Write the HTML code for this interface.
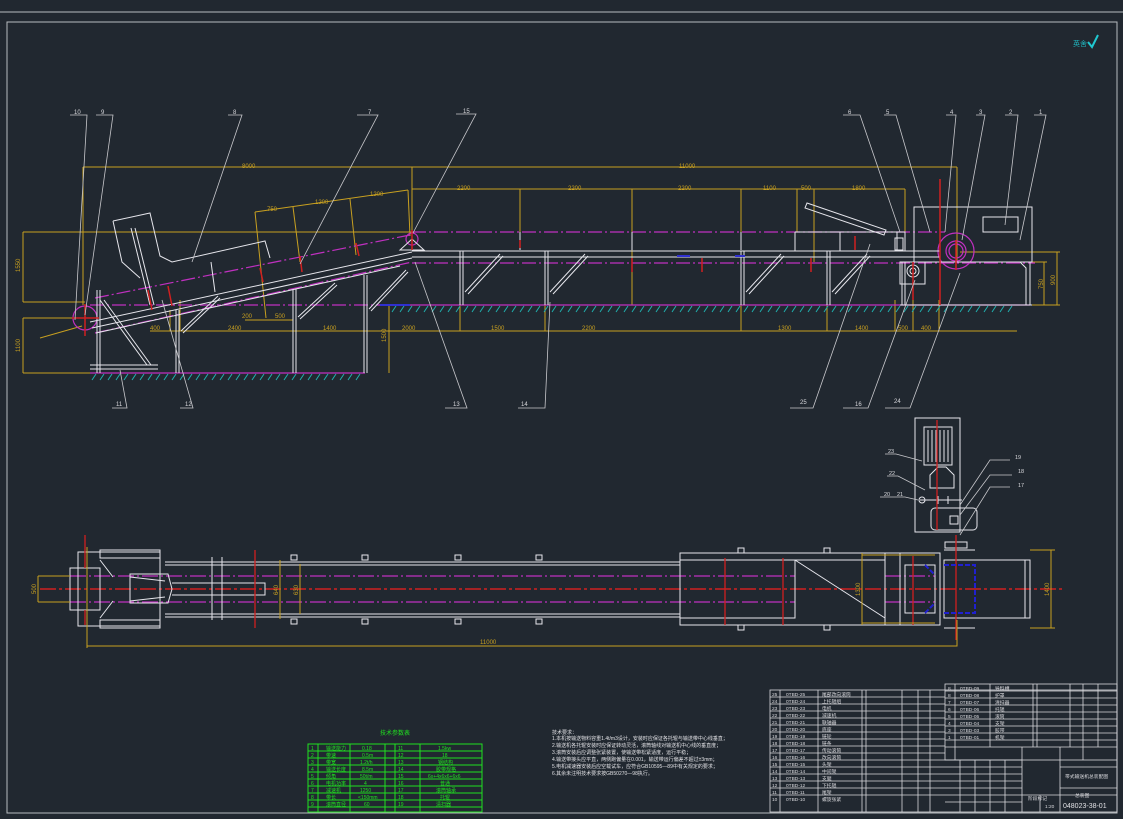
<!DOCTYPE html>
<html><head><meta charset="utf-8"><style>
html,body{margin:0;padding:0;background:#212830;}
svg{display:block;}
text{font-family:"Liberation Sans","Noto Sans CJK SC",sans-serif;}
</style></head><body>
<svg width="1123" height="819" viewBox="0 0 1123 819" xmlns="http://www.w3.org/2000/svg">
<rect width="1123" height="819" fill="#212830"/>
<!-- frames -->
<g fill="none" stroke="#b8bcc0" stroke-width="1">
<line x1="0" y1="12" x2="1123" y2="12"/>
<rect x="7" y="22" width="1110" height="791"/>
</g>
<text x="1073" y="46" font-size="7" fill="#20b8c0">英舍</text>
<path d="M1088 42 l4 5 l6 -12" stroke="#20c8d0" stroke-width="2" fill="none"/>

<!-- ===== ELEVATION VIEW ===== -->
<!-- dimensions yellow -->
<g stroke="#c8a020" stroke-width="1" fill="none">
<line x1="83" y1="167" x2="957" y2="167"/>
<line x1="412" y1="189" x2="905" y2="189"/>
<line x1="83" y1="167" x2="83" y2="305"/>
<line x1="412" y1="167" x2="412" y2="238"/>
<line x1="957" y1="167" x2="957" y2="262"/>
<line x1="520" y1="189" x2="520" y2="232"/>
<line x1="632" y1="189" x2="632" y2="305"/>
<line x1="741" y1="189" x2="741" y2="232"/>
<line x1="797" y1="189" x2="797" y2="232"/>
<line x1="814" y1="189" x2="814" y2="262"/>
<line x1="905" y1="189" x2="905" y2="232"/>
<line x1="23" y1="232" x2="412" y2="232"/>
<line x1="23" y1="302" x2="85" y2="302"/>
<line x1="23" y1="232" x2="23" y2="302"/>
<line x1="23" y1="318" x2="23" y2="373"/>
<line x1="23" y1="318" x2="85" y2="318"/>
<line x1="23" y1="373" x2="92" y2="373"/>
<line x1="150" y1="331" x2="1017" y2="331"/>
<line x1="170" y1="331" x2="170" y2="310"/>
<line x1="180" y1="331" x2="180" y2="300"/>
<line x1="293" y1="331" x2="293" y2="300"/>
<line x1="364" y1="331" x2="364" y2="300"/>
<line x1="460" y1="331" x2="460" y2="300"/>
<line x1="545" y1="331" x2="545" y2="300"/>
<line x1="741" y1="331" x2="741" y2="300"/>
<line x1="827" y1="331" x2="827" y2="300"/>
<line x1="895" y1="331" x2="895" y2="300"/>
<line x1="913" y1="331" x2="913" y2="300"/>
<line x1="939" y1="331" x2="939" y2="300"/>
<line x1="389" y1="305" x2="389" y2="373"/>
<line x1="255" y1="212" x2="408" y2="190"/>
<line x1="255" y1="212" x2="266" y2="318"/>
<line x1="293" y1="207" x2="300" y2="262"/>
<line x1="350" y1="199" x2="356" y2="255"/>
<line x1="408" y1="190" x2="410" y2="236"/>
<line x1="245" y1="320" x2="293" y2="320"/>
<line x1="1057" y1="252" x2="1057" y2="305"/>
<line x1="1044" y1="262" x2="1044" y2="305"/>
<line x1="960" y1="252" x2="1060" y2="252"/>
<line x1="1032" y1="262" x2="1047" y2="262"/>
<line x1="1030" y1="305" x2="1060" y2="305"/>
<line x1="40" y1="338" x2="82" y2="326"/>
</g>
<g fill="#c8a020" font-size="6">
<text x="242" y="168">8000</text><text x="679" y="168">11000</text>
<text x="457" y="190">2200</text><text x="568" y="190">2200</text><text x="678" y="190">2200</text>
<text x="763" y="190">1100</text><text x="801" y="190">500</text><text x="852" y="190">1800</text>
<text x="267" y="211">750</text><text x="315" y="204">1200</text><text x="370" y="196">1200</text>
<text x="150" y="330">400</text><text x="228" y="330">2400</text><text x="323" y="330">1400</text>
<text x="402" y="330">2000</text><text x="491" y="330">1500</text><text x="582" y="330">2200</text>
<text x="778" y="330">1300</text><text x="855" y="330">1400</text><text x="898" y="330">500</text><text x="921" y="330">400</text>
<text x="242" y="318">200</text><text x="275" y="318">500</text>
<text x="0" y="0" transform="translate(20,272) rotate(-90)">1550</text>
<text x="0" y="0" transform="translate(20,352) rotate(-90)">1100</text>
<text x="0" y="0" transform="translate(386,342) rotate(-90)">1500</text>
<text x="0" y="0" transform="translate(1055,285) rotate(-90)">900</text>
<text x="0" y="0" transform="translate(1043,289) rotate(-90)">750</text>
</g>
<!-- magenta belt lines -->
<g stroke="#c030c0" stroke-width="1.2" fill="none" stroke-dasharray="14 3 2 3">
<line x1="412" y1="232" x2="945" y2="232"/>
<line x1="412" y1="263" x2="1035" y2="263"/>
<line x1="95" y1="298" x2="410" y2="235"/>
<line x1="95" y1="333" x2="412" y2="262"/>
<line x1="90" y1="305" x2="390" y2="305"/>
</g>
<g stroke="#c030c0" stroke-width="1.2" fill="none">
<line x1="388" y1="305" x2="1030" y2="305"/>
<line x1="90" y1="373" x2="365" y2="373"/>
<circle cx="85" cy="318" r="12"/>
<circle cx="956" cy="251" r="18"/>
<circle cx="956" cy="251" r="10"/><circle cx="956" cy="251" r="7"/>
<circle cx="412" cy="239" r="6"/>
</g>
<!-- hatch -->
<g stroke="#20b0b0" stroke-width="1">
<path d="M392 312 l4 -6 M400 312 l4 -6 M408 312 l4 -6 M416 312 l4 -6 M424 312 l4 -6 M432 312 l4 -6 M440 312 l4 -6 M448 312 l4 -6 M456 312 l4 -6 M464 312 l4 -6 M472 312 l4 -6 M480 312 l4 -6 M488 312 l4 -6 M496 312 l4 -6 M504 312 l4 -6 M512 312 l4 -6 M520 312 l4 -6 M528 312 l4 -6 M536 312 l4 -6 M544 312 l4 -6 M552 312 l4 -6 M560 312 l4 -6 M568 312 l4 -6 M576 312 l4 -6 M584 312 l4 -6 M592 312 l4 -6 M600 312 l4 -6 M608 312 l4 -6 M616 312 l4 -6 M624 312 l4 -6 M632 312 l4 -6 M640 312 l4 -6 M648 312 l4 -6 M656 312 l4 -6 M664 312 l4 -6 M672 312 l4 -6 M680 312 l4 -6 M688 312 l4 -6 M696 312 l4 -6 M704 312 l4 -6 M712 312 l4 -6 M720 312 l4 -6 M728 312 l4 -6 M736 312 l4 -6 M744 312 l4 -6 M752 312 l4 -6 M760 312 l4 -6 M768 312 l4 -6 M776 312 l4 -6 M784 312 l4 -6 M792 312 l4 -6 M800 312 l4 -6 M808 312 l4 -6 M816 312 l4 -6 M824 312 l4 -6 M832 312 l4 -6 M840 312 l4 -6 M848 312 l4 -6 M856 312 l4 -6 M864 312 l4 -6 M872 312 l4 -6 M880 312 l4 -6 M888 312 l4 -6 M896 312 l4 -6 M904 312 l4 -6 M912 312 l4 -6 M920 312 l4 -6 M928 312 l4 -6 M936 312 l4 -6 M944 312 l4 -6 M952 312 l4 -6 M960 312 l4 -6 M968 312 l4 -6 M976 312 l4 -6 M984 312 l4 -6 M992 312 l4 -6 M1000 312 l4 -6 M1008 312 l4 -6"/>
<path d="M92 380 l4 -6 M100 380 l4 -6 M108 380 l4 -6 M116 380 l4 -6 M124 380 l4 -6 M132 380 l4 -6 M140 380 l4 -6 M148 380 l4 -6 M156 380 l4 -6 M164 380 l4 -6 M172 380 l4 -6 M180 380 l4 -6 M188 380 l4 -6 M196 380 l4 -6 M204 380 l4 -6 M212 380 l4 -6 M220 380 l4 -6 M228 380 l4 -6 M236 380 l4 -6 M244 380 l4 -6 M252 380 l4 -6 M260 380 l4 -6 M268 380 l4 -6 M276 380 l4 -6 M284 380 l4 -6 M292 380 l4 -6 M300 380 l4 -6 M308 380 l4 -6 M316 380 l4 -6 M324 380 l4 -6 M332 380 l4 -6 M340 380 l4 -6 M348 380 l4 -6 M356 380 l4 -6"/>
</g>
<!-- white structure -->
<g stroke="#e6e6ec" stroke-width="1" fill="none">
<line x1="412" y1="251" x2="940" y2="251"/>
<line x1="412" y1="257" x2="940" y2="257"/>
<line x1="90" y1="322" x2="412" y2="252"/>
<line x1="92" y1="328" x2="412" y2="258"/>
<line x1="96" y1="333" x2="400" y2="266"/>
<!-- supports flat -->
<path d="M460 251 V305 M463 251 V305 M545 251 V305 M548 251 V305 M741 251 V305 M744 251 V305 M827 251 V305 M830 251 V305"/>
<path d="M465 292 L500 254 M468 294 L503 256 M550 292 L585 254 M553 294 L588 256 M746 292 L781 254 M749 294 L784 256 M832 292 L867 254 M835 294 L870 256"/>
<!-- supports incline -->
<path d="M176 310 V373 M179 310 V373 M293 289 V373 M296 289 V373 M364 275 V373 M367 275 V373"/>
<path d="M181 331 L218 296 M183 333 L220 298 M298 317 L335 283 M300 319 L337 285 M369 309 L406 270 M371 311 L408 272"/>
<!-- hopper -->
<path d="M113 221 L150 213 L160 256 L172 262 L265 241 L270 258 M113 221 L122 262 L140 278"/>
<path d="M131 228 L150 305 M135 228 L154 305 M211 262 L215 292"/>
<!-- tail frame -->
<path d="M97 290 V373 M100 290 V373 M100 300 L147 365 M104 300 L151 365 M90 365 H158 M90 369 H158"/>
<!-- head -->
<path d="M412 239 L400 250 L424 250 Z"/>
<rect x="914" y="207" width="118" height="55"/>
<path d="M1020 262 L1026 268 V305 M1030 262 V305 M902 262 V305 M905 262 V305 M900 305 H1032"/>
<rect x="983" y="217" width="35" height="15"/>
<path d="M807 203 L886 230 L884 235 L805 208 Z"/>
<path d="M795 232 H905 V251 M795 232 V251 M840 232 V251"/>
<rect x="895" y="238" width="8" height="12"/>
<rect x="900" y="262" width="25" height="22"/>
<circle cx="913" cy="271" r="6"/>
<circle cx="913" cy="271" r="3"/>
<path d="M520 232 V250 M632 232 V250 M741 232 V250 M897 232 V250"/>
</g>
<g stroke="#d02020" stroke-width="1.5" fill="none">
<path d="M940 179 V305 M956 240 V270 M913 262 V300 M85 304 V336 M72 318 H99 M412 230 V250 M520 240 V248 M632 258 V272 M702 258 V272 M811 258 V272 M855 236 V250"/>
<path d="M148 290 L152 310 M168 286 L172 306 M260 268 L263 282 M300 256 L302 272 M356 243 L359 256"/>
</g>
<g stroke="#3030d0" stroke-width="2"><path d="M380 305 H410 M677 256 H690 M735 256 H745"/></g>
<!-- leaders -->
<g stroke="#c8c8cc" stroke-width="0.8" fill="none">
<path d="M70 115 H87 L75 320 M96 115 H113 L85 315 M228 115 H242 L192 262 M357 115 H378 L300 264 M456 114 H476 L413 233"/>
<path d="M843 115 H860 L900 232 M884 115 H896 L930 232 M946 115 H956 L945 232 M976 115 H985 L962 240 M1005 115 H1018 L1005 225 M1034 115 H1046 L1020 240"/>
<path d="M112 408 H127 L120 370 M180 408 H193 L162 300 M445 408 H467 L415 262 M518 408 H545 L550 302 M790 408 H813 L870 244 M843 408 H868 L915 280 M885 408 H910 L960 273"/>
</g>
<g fill="#d8d8dc" font-size="6">
<text x="74" y="114">10</text><text x="101" y="114">9</text><text x="233" y="114">8</text><text x="368" y="114">7</text><text x="463" y="113">15</text>
<text x="848" y="114">6</text><text x="886" y="114">5</text><text x="950" y="114">4</text><text x="979" y="114">3</text><text x="1009" y="114">2</text><text x="1039" y="114">1</text>
<text x="116" y="406">11</text><text x="185" y="406">12</text><text x="453" y="406">13</text><text x="521" y="406">14</text>
<text x="800" y="404">25</text><text x="855" y="406">16</text><text x="894" y="403">24</text>
</g>

<!-- ===== PLAN VIEW ===== -->
<g stroke="#d02020" stroke-width="1.5" stroke-dasharray="16 3 3 3">
<line x1="40" y1="589" x2="1065" y2="589"/>
</g>
<g stroke="#c030c0" stroke-width="1.2" stroke-dasharray="16 3 2 3">
<line x1="70" y1="576" x2="795" y2="576"/>
<line x1="70" y1="602" x2="795" y2="602"/>
<line x1="885" y1="576" x2="935" y2="576"/>
<line x1="885" y1="602" x2="935" y2="602"/>
</g>
<g stroke="#e6e6ec" stroke-width="1" fill="none">
<path d="M165 562 H680 M165 565 H680 M165 614 H680 M165 617 H680"/>
<rect x="70" y="568" width="30" height="42"/>
<rect x="78" y="552" width="82" height="74"/>
<rect x="100" y="550" width="60" height="8"/><rect x="100" y="620" width="60" height="8"/>
<path d="M130 574 H168 L172 589 L168 603 H130 Z M130 577 L165 581 M130 601 L165 597"/>
<path d="M172 583 H265 V595 H172"/>
<path d="M212 557 V620 M222 557 V620"/>
<path d="M100 560 L113 577 M100 618 L113 601"/>
<rect x="680" y="553" width="260" height="72"/>
<rect x="680" y="560" width="115" height="58"/>
<path d="M795 560 L885 618 M795 560 H885 M885 553 V625 M900 553 V625 M940 553 V625"/>
<rect x="944" y="560" width="86" height="58"/>
<path d="M1025 560 V618 M944 550 H975 M944 628 H975"/>
<rect x="905" y="565" width="30" height="48"/>
<rect x="915" y="418" width="45" height="114"/>
<rect x="924" y="427" width="28" height="38"/>
<path d="M928 430 V462 M932 430 V462 M936 430 V462 M940 430 V462 M944 430 V462 M948 430 V462"/>
<path d="M930 475 L938 467 H946 L954 475 V488 H930 Z"/>
<path d="M920 500 H962 M938 496 V504 M948 496 V504"/>
<circle cx="922" cy="500" r="3"/>
<rect x="931" y="508" width="46" height="22" rx="4"/>
<rect x="950" y="516" width="8" height="8"/>
<rect x="945" y="542" width="22" height="6"/>
</g>
<g fill="none" stroke="#e6e6ec" stroke-width="1">
<rect x="291" y="555" width="6" height="5"/><rect x="362" y="555" width="6" height="5"/><rect x="455" y="555" width="6" height="5"/><rect x="536" y="555" width="6" height="5"/>
<rect x="291" y="619" width="6" height="5"/><rect x="362" y="619" width="6" height="5"/><rect x="455" y="619" width="6" height="5"/><rect x="536" y="619" width="6" height="5"/>
<rect x="738" y="548" width="6" height="5"/><rect x="824" y="548" width="6" height="5"/><rect x="738" y="625" width="6" height="5"/><rect x="824" y="625" width="6" height="5"/>
</g>
<g stroke="#d02020" stroke-width="1.3"><path d="M85 535 V568 M85 610 V625 M255 550 V628 M725 558 V625 M783 558 V625 M913 556 V625 M956 535 V640 M937 420 V530"/></g>
<g stroke="#2020d0" stroke-width="2" fill="none" stroke-dasharray="5 2"><path d="M944 565 H975 V613 H944 M925 565 L935 575 M925 613 L935 603"/></g>
<g stroke="#c8a020" stroke-width="1" fill="none">
<path d="M87 547 V648 M87 646 H957 V620"/>
<path d="M38 576 H70 M38 602 H70 M38 576 V602"/>
<path d="M280 560 V619 M300 564 V614"/>
<path d="M862 553 V625 M862 555 H935 M862 623 H935"/>
<path d="M1051 550 V628 M1030 550 H1055 M1030 628 H1055"/>
</g>
<g fill="#c8a020" font-size="6">
<text x="480" y="644">11000</text>
<text transform="translate(36,594) rotate(-90)">500</text>
<text transform="translate(278,595) rotate(-90)">640</text>
<text transform="translate(298,595) rotate(-90)">630</text>
<text transform="translate(860,596) rotate(-90)">1300</text>
<text transform="translate(1049,596) rotate(-90)">1400</text>
</g>
<g stroke="#c8c8cc" stroke-width="0.8" fill="none">
<path d="M885 454 H896 L922 461 M887 476 H898 L925 490 M880 497 H905 L918 500 M1010 460 H990 L960 505 M1012 475 H990 L960 515 M1010 487 H990 L960 535"/>
</g>
<g fill="#d8d8dc" font-size="5.5">
<text x="888" y="453">23</text><text x="889" y="475">22</text><text x="884" y="496">20</text><text x="897" y="496">21</text>
<text x="1015" y="459">19</text><text x="1018" y="473">18</text><text x="1018" y="487">17</text>
</g>

<!-- ===== GREEN TABLE ===== -->
<text x="380" y="735" font-size="6" fill="#20e020">技术参数表</text>
<g stroke="#20e020" stroke-width="1" fill="none">
<rect x="308" y="744" width="174" height="68"/>
<path d="M308 751 H482 M308 758 H482 M308 765 H482 M308 772 H482 M308 779 H482 M308 786 H482 M308 793 H482 M308 800 H482 M308 807 H482"/>
<path d="M318 744 V812 M350 744 V812 M385 744 V812 M395 744 V812 M420 744 V812"/>
</g>
<g fill="#20e020" font-size="5">
<text x="311" y="750">1</text><text x="311" y="757">2</text><text x="311" y="764">3</text><text x="311" y="771">4</text><text x="311" y="778">5</text><text x="311" y="785">6</text><text x="311" y="792">7</text><text x="311" y="799">8</text><text x="311" y="806">9</text>
<text x="326" y="750">输送能力</text><text x="326" y="757">带速</text><text x="326" y="764">带宽</text><text x="326" y="771">输送长度</text><text x="326" y="778">倾角</text><text x="326" y="785">电机功率</text><text x="326" y="792">减速机</text><text x="326" y="799">带长</text><text x="326" y="806">滚筒直径</text>
<text x="362" y="750">0.18</text><text x="362" y="757">0.5m</text><text x="360" y="764">1.2t/h</text><text x="362" y="771">8.5m</text><text x="360" y="778">50t/m</text><text x="364" y="785">4</text><text x="360" y="792">1250</text><text x="358" y="799">&lt;150mm</text><text x="364" y="806">60</text>
<text x="398" y="750">11</text><text x="398" y="757">12</text><text x="398" y="764">13</text><text x="398" y="771">14</text><text x="398" y="778">15</text><text x="398" y="785">16</text><text x="398" y="792">17</text><text x="398" y="799">18</text><text x="398" y="806">19</text>
<text x="438" y="750">1.5kw</text><text x="442" y="757">18</text><text x="438" y="764">钢结构</text><text x="436" y="771">胶带规格</text><text x="428" y="778">6x+4x6x6+6x6</text><text x="440" y="785">普通</text><text x="436" y="792">滚筒轴承</text><text x="440" y="799">托辊</text><text x="436" y="806">清扫器</text>
</g>

<!-- ===== NOTES ===== -->
<g fill="#e0e0e4" font-size="5">
<text x="552" y="734">技术要求：</text>
<text x="552" y="740">1.本机按输送物料容重1.4t/m3设计，安装时应保证各托辊与输送带中心线垂直；</text>
<text x="552" y="747">2.输送机各托辊安装时应保证转动灵活，滚筒轴线对输送机中心线的垂直度；</text>
<text x="552" y="754">3.滚筒安装后应调整张紧装置，使输送带松紧适度，运行平稳；</text>
<text x="552" y="761">4.输送带接头应平直，两侧跑偏量在0.001，输送带运行偏差不超过±3mm；</text>
<text x="552" y="768">5.电机减速器安装后应空载试车，应符合GB10595—89中有关规定的要求；</text>
<text x="552" y="775">6.其余未注明技术要求按GB50270—98执行。</text>
</g>

<!-- ===== TITLE BLOCK ===== -->
<g stroke="#d8d8dc" stroke-width="0.8" fill="none">
<rect x="770" y="690" width="347" height="122"/>
<rect x="945" y="684" width="172" height="76"/>
<path d="M770 697 H945 M770 704 H945 M770 711 H945 M770 718 H945 M770 725 H945 M770 732 H945 M770 739 H945 M770 746 H945 M770 753 H945 M770 760 H945 M770 767 H945 M770 774 H945 M770 781 H945 M770 788 H945 M770 795 H945"/>
<path d="M780 690 V812 M818 690 V812 M862 690 V812 M866 690 V812 M902 690 V812 M918 690 V812 M930 690 V812"/>
<path d="M945 691 H1117 M945 698 H1117 M945 705 H1117 M945 712 H1117 M945 719 H1117 M945 726 H1117 M945 733 H1117 M945 740 H1117 M945 747 H1117"/>
<path d="M955 684 V760 M990 684 V747 M1033 684 V747 M1037 684 V747 M1070 684 V747 M1083 684 V760 M1098 684 V747"/>
<path d="M945 760 H1022 M945 767 H1022 M945 774 H1022 M945 781 H1022 M945 788 H1022 M945 795 H1022 M945 802 H1022"/>
<path d="M960 760 V812 M975 760 V812 M990 760 V812 M1005 760 V812 M1022 747 V812 M1022 795 H1117 M1060 747 V812 M1060 767 H1117 M1060 788 H1117 M1040 795 V812"/>
</g>
<g fill="#d8d8dc" font-size="4.8">
<text x="772" y="696">25</text><text x="786" y="696">0TBD-25</text><text x="822" y="696">尾部改向滚筒</text>
<text x="772" y="703">24</text><text x="786" y="703">0TBD-24</text><text x="822" y="703">上托辊组</text>
<text x="772" y="710">23</text><text x="786" y="710">0TBD-23</text><text x="822" y="710">电机</text>
<text x="772" y="717">22</text><text x="786" y="717">0TBD-22</text><text x="822" y="717">减速机</text>
<text x="772" y="724">21</text><text x="786" y="724">0TBD-21</text><text x="822" y="724">联轴器</text>
<text x="772" y="731">20</text><text x="786" y="731">0TBD-20</text><text x="822" y="731">底座</text>
<text x="772" y="738">19</text><text x="786" y="738">0TBD-19</text><text x="822" y="738">链轮</text>
<text x="772" y="745">18</text><text x="786" y="745">0TBD-18</text><text x="822" y="745">链条</text>
<text x="772" y="752">17</text><text x="786" y="752">0TBD-17</text><text x="822" y="752">传动滚筒</text>
<text x="772" y="759">16</text><text x="786" y="759">0TBD-16</text><text x="822" y="759">改向滚筒</text>
<text x="772" y="766">15</text><text x="786" y="766">0TBD-15</text><text x="822" y="766">头架</text>
<text x="772" y="773">14</text><text x="786" y="773">0TBD-14</text><text x="822" y="773">中间架</text>
<text x="772" y="780">13</text><text x="786" y="780">0TBD-13</text><text x="822" y="780">支腿</text>
<text x="772" y="787">12</text><text x="786" y="787">0TBD-12</text><text x="822" y="787">下托辊</text>
<text x="772" y="794">11</text><text x="786" y="794">0TBD-11</text><text x="822" y="794">尾架</text>
<text x="772" y="801">10</text><text x="786" y="801">0TBD-10</text><text x="822" y="801">螺旋张紧</text>
<text x="948" y="690">8</text><text x="960" y="690">0TBD-09</text><text x="995" y="690">导料槽</text>
<text x="948" y="697">8</text><text x="960" y="697">0TBD-08</text><text x="995" y="697">护罩</text>
<text x="948" y="704">7</text><text x="960" y="704">0TBD-07</text><text x="995" y="704">清扫器</text>
<text x="948" y="711">6</text><text x="960" y="711">0TBD-06</text><text x="995" y="711">托辊</text>
<text x="948" y="718">5</text><text x="960" y="718">0TBD-05</text><text x="995" y="718">滚筒</text>
<text x="948" y="725">4</text><text x="960" y="725">0TBD-04</text><text x="995" y="725">支架</text>
<text x="948" y="732">3</text><text x="960" y="732">0TBD-03</text><text x="995" y="732">胶带</text>
<text x="948" y="739">1</text><text x="960" y="739">0TBD-01</text><text x="995" y="739">机架</text>
<text x="1065" y="778">带式输送机总装配图</text>
<text x="1075" y="797">总装图</text>
<text x="1028" y="800">阶段标记</text>
<text x="1045" y="808">1:20</text>
</g>
<text x="1063" y="808" font-size="7" fill="#e0e0e4">048023-38-01</text>
</svg>
</body></html>
